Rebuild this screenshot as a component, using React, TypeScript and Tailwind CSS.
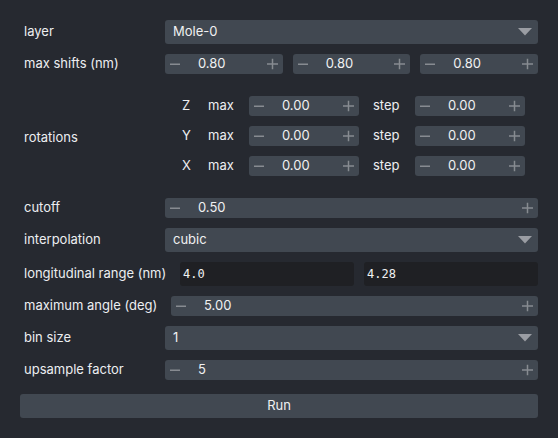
import React from "react";

const font = { fontFamily: "Inter, 'Noto Sans', sans-serif" };

function Spin({ value, className = "" }: { value: string; className?: string }) {
  return (
    <div className={`relative flex h-5 items-center rounded-[3px] bg-[#414851] ${className}`}>
      <svg className="absolute left-[5px] top-1/2 -translate-y-1/2" width="10" height="10" viewBox="0 0 10 10">
        <rect x="0" y="4.5" width="10" height="1.5" fill="#878b91" />
      </svg>
      <span className="pl-[33px] text-[13px] text-[#f0f1f2]">{value}</span>
      <svg className="absolute right-[5px] top-1/2 -translate-y-1/2" width="11" height="11" viewBox="0 0 11 11">
        <rect x="0" y="4.75" width="11" height="1.5" fill="#878b91" />
        <rect x="4.75" y="0" width="1.5" height="11" fill="#878b91" />
      </svg>
    </div>
  );
}

function Combo({ value }: { value: string }) {
  return (
    <div className="relative flex h-6 flex-1 items-center rounded-[3px] bg-[#414851] pl-2 text-[13px] text-[#f0f1f2]">
      {value}
      <svg className="absolute right-[6px] top-[8px]" width="14" height="8" viewBox="0 0 14 8">
        <polygon points="0,0 14,0 7,7.5" fill="#9a9da3" />
      </svg>
    </div>
  );
}

function Label({ children, w }: { children: React.ReactNode; w: string }) {
  return <div className={`${w} shrink-0 pl-1 text-[13px] text-[#eceef0]`}>{children}</div>;
}

export default function App() {
  return (
    <div className="h-[438px] w-[558px] bg-[#262930] px-5 pt-5" style={font}>
      <div className="flex items-center">
        <Label w="w-[145px]">layer</Label>
        <Combo value="Mole-0" />
      </div>
      <div className="mt-[10px] flex items-center">
        <Label w="w-[145px]">max shifts (nm)</Label>
        <div className="flex flex-1 gap-[10px]">
          <Spin value="0.80" className="flex-1" />
          <Spin value="0.80" className="flex-1" />
          <Spin value="0.80" className="flex-1" />
        </div>
      </div>
      <div className="mt-[22px] flex items-center">
        <Label w="w-[145px] pt-[4px]">rotations</Label>
        <div className="flex flex-col gap-[10px] pl-4 text-[13px] text-[#eceef0]">
          {["Z", "Y", "X"].map((a) => (
            <div key={a} className="flex items-center">
              <div className="w-[27px] pl-[1px]">{a}</div>
              <div className="w-[41px]">max</div>
              <Spin value="0.00" className="w-[110px]" />
              <div className="w-[56px] pl-[14px]">step</div>
              <Spin value="0.00" className="w-[110px]" />
            </div>
          ))}
        </div>
      </div>
      <div className="mt-[22px] flex items-center">
        <Label w="w-[145px]">cutoff</Label>
        <Spin value="0.50" className="flex-1" />
      </div>
      <div className="mt-[10px] flex items-center">
        <Label w="w-[145px]">interpolation</Label>
        <Combo value="cubic" />
      </div>
      <div className="mt-[10px] flex items-center">
        <Label w="w-[160px]">longitudinal range (nm)</Label>
        <div className="flex flex-1 gap-[10px]">
          {["4.0", "4.28"].map((v) => (
            <div
              key={v}
              className="flex h-6 flex-1 items-center rounded-[3px] bg-[#1f2024] pl-[3px] text-[12px] text-[#f0f1f2]"
              style={{ fontFamily: "'DejaVu Sans Mono', monospace" }}
            >
              {v}
            </div>
          ))}
        </div>
      </div>
      <div className="mt-[10px] flex items-center">
        <Label w="w-[151px]">maximum angle (deg)</Label>
        <Spin value="5.00" className="flex-1" />
      </div>
      <div className="mt-[10px] flex items-center">
        <Label w="w-[145px]">bin size</Label>
        <Combo value="1" />
      </div>
      <div className="mt-[10px] flex items-center">
        <Label w="w-[145px]">upsample factor</Label>
        <Spin value="5" className="flex-1" />
      </div>
      <div className="mt-[14px] flex h-6 items-center justify-center rounded-[3px] bg-[#414851] text-[13px] text-[#f0f1f2]">
        Run
      </div>
    </div>
  );
}
